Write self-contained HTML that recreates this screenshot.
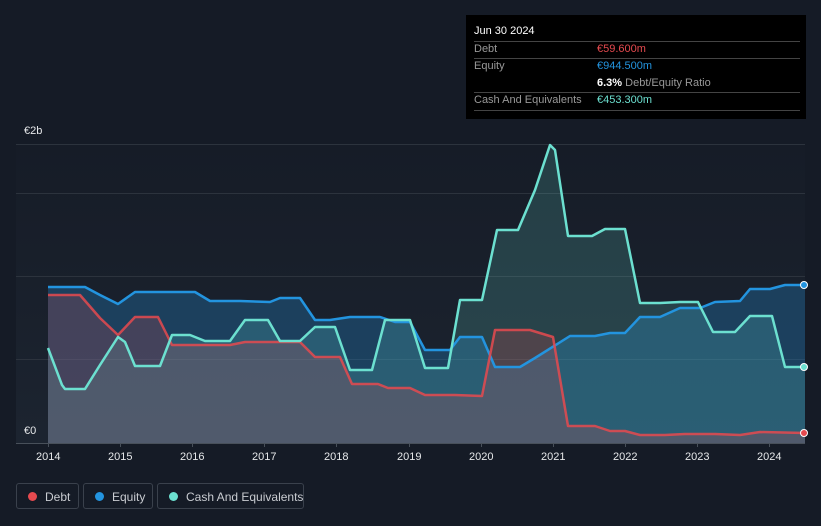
<!DOCTYPE html>
<html><head><meta charset="utf-8"><style>
body{margin:0;width:821px;height:526px;background:#151b26;font-family:"Liberation Sans",sans-serif;overflow:hidden;position:relative}
.tt{position:absolute;left:466px;top:15px;width:340px;height:104px;background:#000;color:#fff;font-size:11px}
.tt .r{position:absolute;left:8px;width:326px;border-top:1px solid #444}
.tt span{position:absolute;white-space:nowrap}
.lg{position:absolute;top:483px;height:26px;border:1px solid #3a414c;border-radius:3px;color:#c9ccd1;font-size:12px;line-height:26px;box-sizing:border-box;white-space:nowrap}
.lg i{position:absolute;left:11px;top:8px;width:9px;height:9px;border-radius:50%}
.ax{position:absolute;color:#e6e8ea;font-size:11px}
</style></head><body>
<svg width="821" height="526" style="position:absolute;left:0;top:0">
<defs><linearGradient id="g" x1="0" y1="0" x2="0" y2="1"><stop offset="0" stop-color="#161c27"/><stop offset="1" stop-color="#1c2430"/></linearGradient></defs>
<rect x="16" y="144" width="789" height="299" fill="url(#g)"/>
<g stroke="#2c333d" stroke-width="1"><line x1="16" y1="144.5" x2="805" y2="144.5"/><line x1="16" y1="193.5" x2="805" y2="193.5"/><line x1="16" y1="276.5" x2="805" y2="276.5"/><line x1="16" y1="359.5" x2="805" y2="359.5"/><line x1="16" y1="443.5" x2="805" y2="443.5" stroke="#48505a"/></g>
<g stroke="#48505a"><line x1="48.5" y1="443" x2="48.5" y2="447"/><line x1="120.5" y1="443" x2="120.5" y2="447"/><line x1="192.5" y1="443" x2="192.5" y2="447"/><line x1="264.5" y1="443" x2="264.5" y2="447"/><line x1="336.5" y1="443" x2="336.5" y2="447"/><line x1="409.5" y1="443" x2="409.5" y2="447"/><line x1="481.5" y1="443" x2="481.5" y2="447"/><line x1="553.5" y1="443" x2="553.5" y2="447"/><line x1="625.5" y1="443" x2="625.5" y2="447"/><line x1="697.5" y1="443" x2="697.5" y2="447"/><line x1="769.5" y1="443" x2="769.5" y2="447"/></g>
<polygon fill="#2394df" fill-opacity="0.28" points="48,443 48,287 85,287 100,295 118,304 135,292 170,292 195,292 210,301 240,301 270,302 280,298 300,298 315,320 330,320 350,317 380,317 395,322 410,322 425,350 450,350 460,337 482,337 495,367 520,367 535,358 570,336 595,336 610,333 625,333 640,317 660,317 680,308 700,308 715,302 740,301 750,289 770,289 785,285 805,285 805,443"/>
<polygon fill="#6ce0d0" fill-opacity="0.18" points="48,443 48,348 62,385 65,389 85,389 100,365 118,337 125,342 135,366 160,366 172,335 190,335 205,341 230,341 245,320 268,320 280,341 300,341 315,327 335,327 350,370 372,370 385,320 410,320 425,368 448,368 460,300 482,300 497,230 518,230 535,190 550,145 555,150 568,236 592,236 605,229 625,229 640,303 660,303 680,302 698,302 713,332 735,332 750,316 772,316 785,367 805,367 805,443"/>
<polygon fill="#e64a4f" fill-opacity="0.2" points="48,443 48,295 80,295 100,318 118,335 135,317 158,317 172,345 230,345 245,342 300,342 315,357 340,357 352,384 378,384 388,388 410,388 425,395 455,395 482,396 495,330 530,330 553,337 568,426 595,426 610,431 625,431 640,435 665,435 685,434 715,434 740,435 760,432 805,433 805,443"/>
<g fill="none" stroke-width="2.5" stroke-linejoin="round">
<polyline stroke="#2394df" points="48,287 85,287 100,295 118,304 135,292 170,292 195,292 210,301 240,301 270,302 280,298 300,298 315,320 330,320 350,317 380,317 395,322 410,322 425,350 450,350 460,337 482,337 495,367 520,367 535,358 570,336 595,336 610,333 625,333 640,317 660,317 680,308 700,308 715,302 740,301 750,289 770,289 785,285 805,285"/>
<polyline stroke="#e64a4f" stroke-opacity="0.85" points="48,295 80,295 100,318 118,335 135,317 158,317 172,345 230,345 245,342 300,342 315,357 340,357 352,384 378,384 388,388 410,388 425,395 455,395 482,396 495,330 530,330 553,337 568,426 595,426 610,431 625,431 640,435 665,435 685,434 715,434 740,435 760,432 805,433"/>
<polyline stroke="#6ce0d0" points="48,348 62,385 65,389 85,389 100,365 118,337 125,342 135,366 160,366 172,335 190,335 205,341 230,341 245,320 268,320 280,341 300,341 315,327 335,327 350,370 372,370 385,320 410,320 425,368 448,368 460,300 482,300 497,230 518,230 535,190 550,145 555,150 568,236 592,236 605,229 625,229 640,303 660,303 680,302 698,302 713,332 735,332 750,316 772,316 785,367 805,367"/>
</g>
<circle cx="804" cy="285" r="3.5" fill="#2394df" stroke="#fff" stroke-width="1"/>
<circle cx="804" cy="367" r="3.5" fill="#6ce0d0" stroke="#fff" stroke-width="1"/>
<circle cx="804" cy="433" r="3.5" fill="#e64a4f" stroke="#fff" stroke-width="1"/>
</svg>
<div class="ax" style="left:24px;top:125px">€2b</div>
<div class="ax" style="left:24px;top:425px">€0</div>
<div class="ax" style="left:36px;top:451px">2014</div>
<div class="ax" style="left:108px;top:451px">2015</div>
<div class="ax" style="left:180px;top:451px">2016</div>
<div class="ax" style="left:252px;top:451px">2017</div>
<div class="ax" style="left:324px;top:451px">2018</div>
<div class="ax" style="left:397px;top:451px">2019</div>
<div class="ax" style="left:469px;top:451px">2020</div>
<div class="ax" style="left:541px;top:451px">2021</div>
<div class="ax" style="left:613px;top:451px">2022</div>
<div class="ax" style="left:685px;top:451px">2023</div>
<div class="ax" style="left:757px;top:451px">2024</div>
<div class="tt">
<span style="left:8px;top:10px">Jun 30 2024</span>
<div class="r" style="top:26px"></div>
<span style="left:8px;top:28px;color:#999">Debt</span><span style="left:131px;top:28px;color:#e64a4f">€59.600m</span>
<div class="r" style="top:43px"></div>
<span style="left:8px;top:45px;color:#999">Equity</span><span style="left:131px;top:45px;color:#2394df">€944.500m</span>
<span style="left:131px;top:62px;color:#999"><b style="color:#fff">6.3%</b> Debt/Equity Ratio</span>
<div class="r" style="top:77px"></div>
<span style="left:8px;top:79px;color:#999">Cash And Equivalents</span><span style="left:131px;top:79px;color:#6ce0d0">€453.300m</span>
<div class="r" style="top:95px"></div>
</div>
<div class="lg" style="left:16px;width:63px"><i style="background:#e64a4f"></i><span style="position:absolute;left:28px">Debt</span></div>
<div class="lg" style="left:83px;width:70px"><i style="background:#2394df"></i><span style="position:absolute;left:28px">Equity</span></div>
<div class="lg" style="left:157px;width:147px"><i style="background:#6ce0d0"></i><span style="position:absolute;left:28px">Cash And Equivalents</span></div>
</body></html>
